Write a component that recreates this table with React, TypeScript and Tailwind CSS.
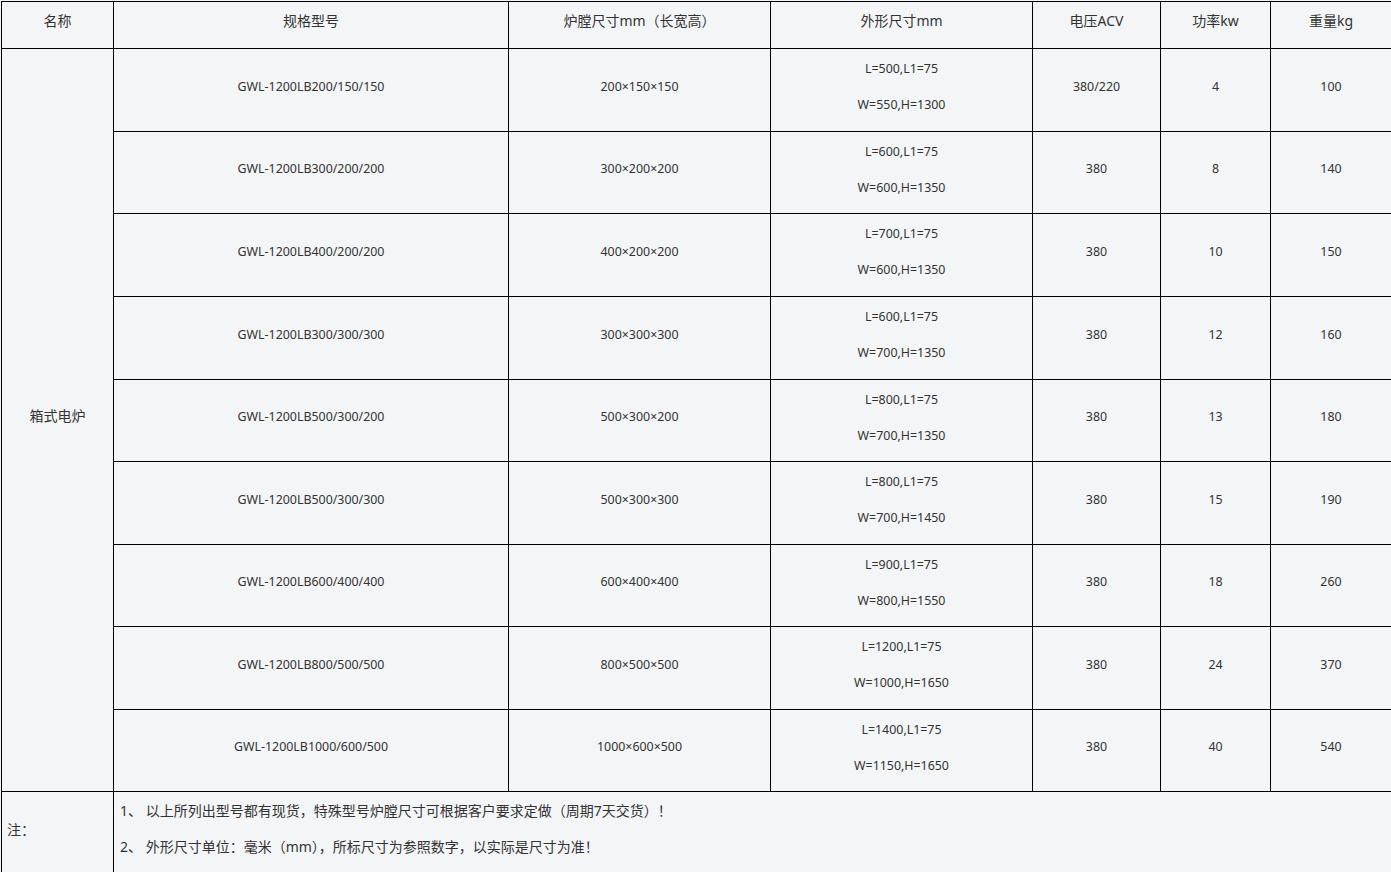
const rows = [
  { model: 'GWL-1200LB200/150/150', chamber: '200×150×150', l: 'L=500,L1=75', w: 'W=550,H=1300', v: '380/220', p: '4', kg: '100', h: 83 },
  { model: 'GWL-1200LB300/200/200', chamber: '300×200×200', l: 'L=600,L1=75', w: 'W=600,H=1350', v: '380', p: '8', kg: '140', h: 82 },
  { model: 'GWL-1200LB400/200/200', chamber: '400×200×200', l: 'L=700,L1=75', w: 'W=600,H=1350', v: '380', p: '10', kg: '150', h: 83 },
  { model: 'GWL-1200LB300/300/300', chamber: '300×300×300', l: 'L=600,L1=75', w: 'W=700,H=1350', v: '380', p: '12', kg: '160', h: 83 },
  { model: 'GWL-1200LB500/300/200', chamber: '500×300×200', l: 'L=800,L1=75', w: 'W=700,H=1350', v: '380', p: '13', kg: '180', h: 82 },
  { model: 'GWL-1200LB500/300/300', chamber: '500×300×300', l: 'L=800,L1=75', w: 'W=700,H=1450', v: '380', p: '15', kg: '190', h: 83 },
  { model: 'GWL-1200LB600/400/400', chamber: '600×400×400', l: 'L=900,L1=75', w: 'W=800,H=1550', v: '380', p: '18', kg: '260', h: 82 },
  { model: 'GWL-1200LB800/500/500', chamber: '800×500×500', l: 'L=1200,L1=75', w: 'W=1000,H=1650', v: '380', p: '24', kg: '370', h: 83 },
  { model: 'GWL-1200LB1000/600/500', chamber: '1000×600×500', l: 'L=1400,L1=75', w: 'W=1150,H=1650', v: '380', p: '40', kg: '540', h: 82 },
];

const cell = 'border border-black text-center align-middle p-0 pb-[6px]';
const head = 'border border-black text-center align-middle p-0 pb-[10px] font-normal';

export default function App() {
  return (
    <div className="min-h-screen bg-[#f4f5f7] pl-px pt-px text-[#333] font-['Noto_Sans','Noto_Sans_CJK_SC',sans-serif]">
      <table className="table-fixed border-collapse w-[1390px]">
        <colgroup>
          <col className="w-[112px]" />
          <col className="w-[395px]" />
          <col className="w-[262px]" />
          <col className="w-[262px]" />
          <col className="w-[128px]" />
          <col className="w-[110px]" />
          <col className="w-[121px]" />
        </colgroup>
        <thead>
          <tr className="h-[47px] text-[14px]">
            <th className={head}>名称</th>
            <th className={head}>规格型号</th>
            <th className={head}>炉膛尺寸mm（长宽高）</th>
            <th className={head}>外形尺寸mm</th>
            <th className={head}>电压ACV</th>
            <th className={head}>功率kw</th>
            <th className={head}>重量kg</th>
          </tr>
        </thead>
        <tbody className="text-[12.4px]">
          {rows.map((r, i) => (
            <tr key={r.model} style={{ height: r.h }}>
              {i === 0 && (
                <td rowSpan={rows.length} className="border border-black text-center align-middle p-0 pb-[10px] text-[14px]">箱式电炉</td>
              )}
              <td className={cell}>{r.model}</td>
              <td className={cell}>{r.chamber}</td>
              <td className={cell}>
                <p className="leading-[36px]">{r.l}</p>
                <p className="leading-[36px]">{r.w}</p>
              </td>
              <td className={cell}>{r.v}</td>
              <td className={cell}>{r.p}</td>
              <td className={cell}>{r.kg}</td>
            </tr>
          ))}
          <tr className="text-[14px]">
            <td className="border border-black align-middle pl-[5px] pt-[1px] pb-[10px]">注：</td>
            <td colSpan={6} className="border border-black align-middle pl-[6px] pt-[1px] pb-[10px]">
              <p className="leading-[36px]">1、 以上所列出型号都有现货，特殊型号炉膛尺寸可根据客户要求定做（周期7天交货）！</p>
              <p className="leading-[36px]">2、 外形尺寸单位：毫米（mm），所标尺寸为参照数字，以实际是尺寸为准！</p>
            </td>
          </tr>
        </tbody>
      </table>
    </div>
  );
}
